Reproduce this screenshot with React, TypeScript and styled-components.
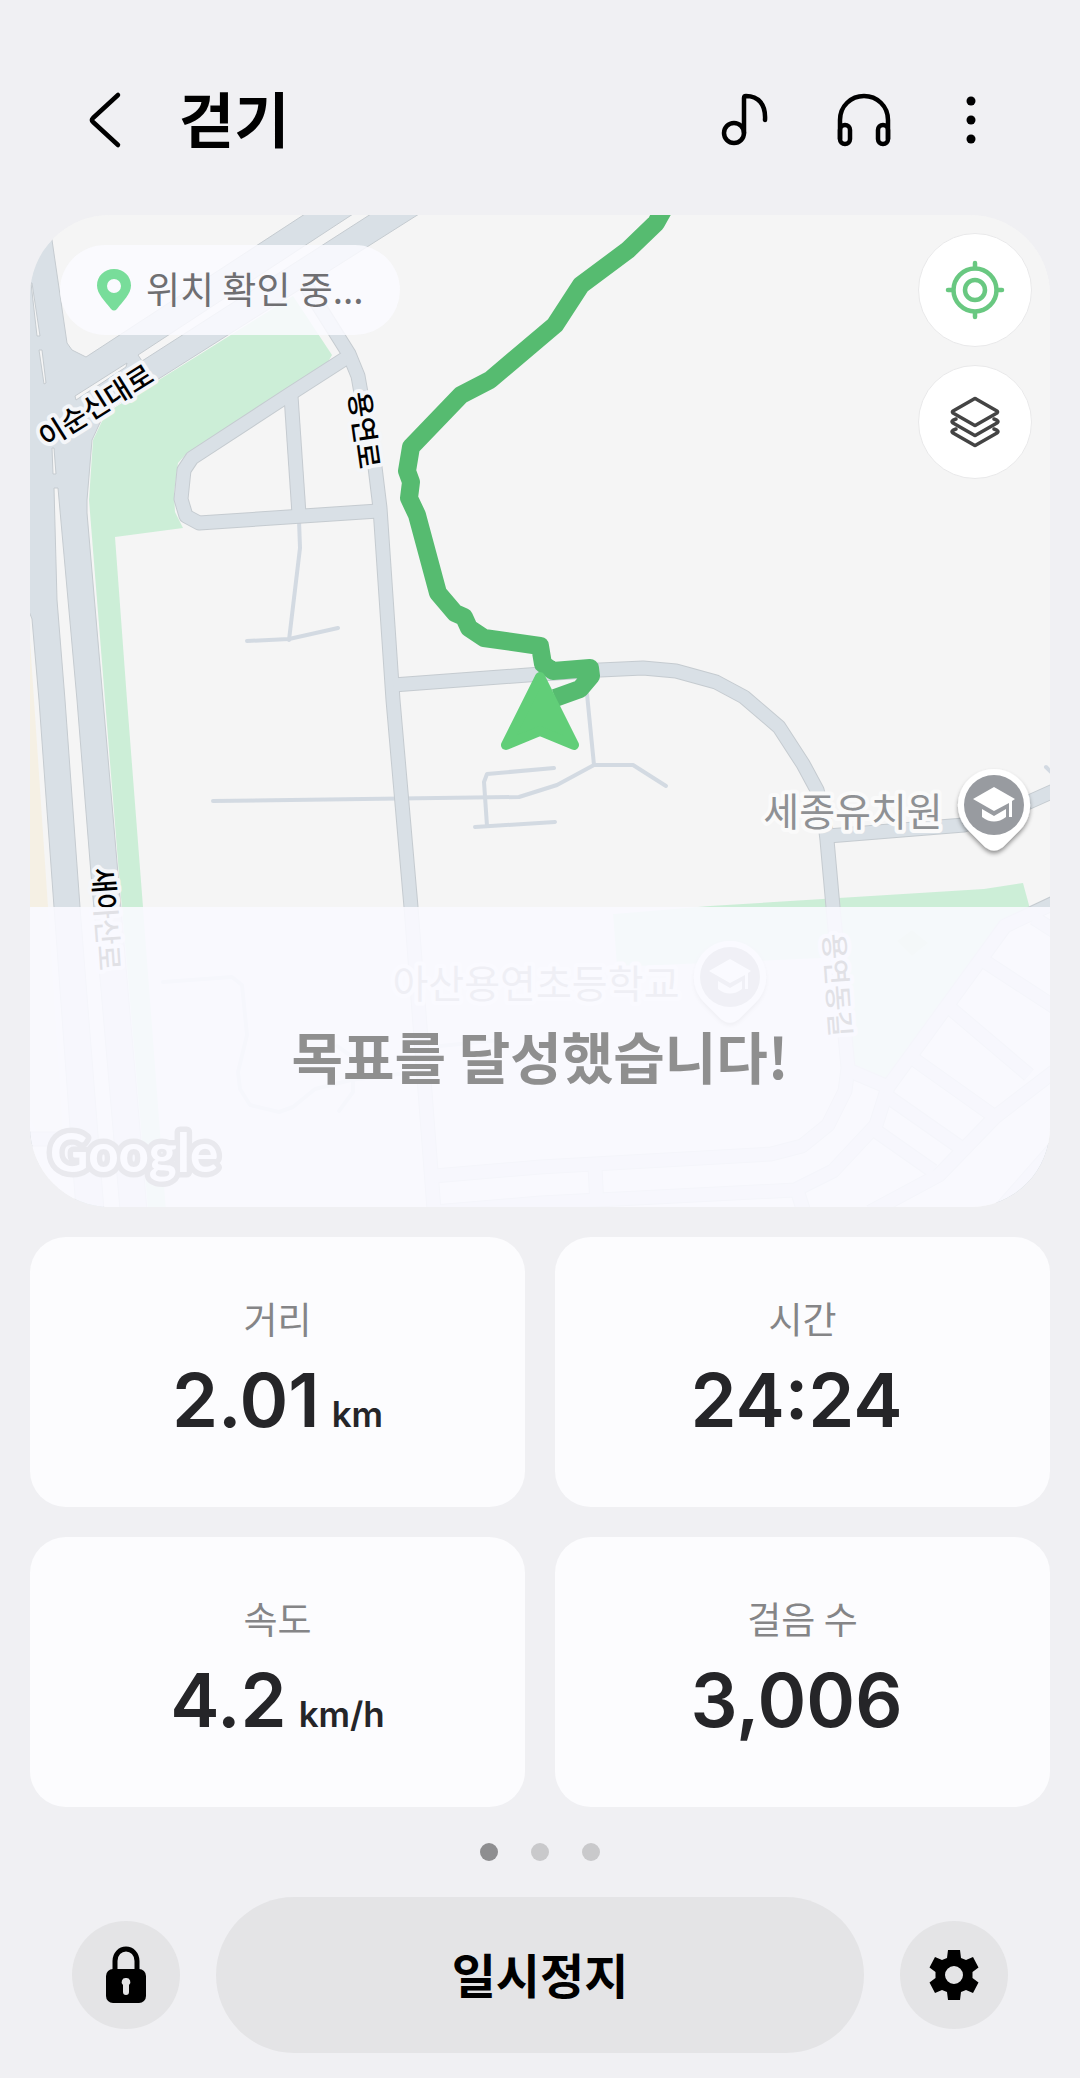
import React from "react";
import styled, { createGlobalStyle } from "styled-components";

const GlobalStyle = createGlobalStyle`
  *, *::before, *::after { box-sizing: border-box; }
  body {
    margin: 0;
    background: #f0f0f3;
    font-family: "Noto Sans CJK KR", "Noto Sans", sans-serif;
  }
  button {
    font: inherit;
    color: inherit;
    border: 0;
    padding: 0;
    background: none;
    cursor: pointer;
  }
  svg { display: block; }
`;

const Page = styled.main`
  display: flex;
  flex-direction: column;
  color: #000;
`;

const Header = styled.header`
  display: flex;
  align-items: center;
  padding: 72px 86px 47px 80px;
`;

const Title = styled.h1`
  flex: 1;
  margin: 0 0 0 49px;
  padding-bottom: 6px;
  font-size: 60px;
  line-height: 90px;
  font-weight: 700;
`;

const Actions = styled.div`
  display: flex;
  gap: 48px;
`;

const IconButton = styled.button<{ $width: number }>`
  display: grid;
  place-items: center;
  width: ${(p) => p.$width}px;
  height: 72px;
`;

const Content = styled.div`
  display: flex;
  flex-direction: column;
  gap: 30px;
  padding: 0 30px;
`;

const MapCard = styled.section`
  position: relative;
  aspect-ratio: 1020 / 992;
  overflow: hidden;
  border-radius: 80px;
  background: #f5f5f5;
`;

const MapArt = styled.svg`
  width: 100%;
  height: 100%;
`;

const LocationPill = styled.div`
  position: absolute;
  top: 30px;
  left: 30px;
  display: flex;
  align-items: center;
  gap: 14px;
  height: 90px;
  padding: 0 36px;
  border-radius: 45px;
  background: rgba(250, 250, 255, 0.85);
  color: #6f6f72;
  font-size: 37px;
  line-height: 48px;
`;

const PillText = styled.span`
  padding-bottom: 4px;
`;

const MapControls = styled.div`
  position: absolute;
  top: 18px;
  right: 18px;
  display: flex;
  flex-direction: column;
  gap: 18px;
`;

const MapButton = styled.button`
  display: grid;
  place-items: center;
  width: 114px;
  height: 114px;
  border: 1px solid #e9e9ea;
  border-radius: 50%;
  background: #fff;
`;

const GoalBanner = styled.div`
  position: absolute;
  right: 0;
  bottom: 0;
  left: 0;
  display: flex;
  align-items: center;
  justify-content: center;
  height: 300px;
  padding-bottom: 4px;
  background: rgba(250, 250, 255, 0.9);
  color: #8f8f8f;
  font-size: 56px;
  line-height: 60px;
  font-weight: 700;
`;

const Stats = styled.dl`
  display: grid;
  grid-template-columns: 1fr 1fr;
  gap: 30px;
  margin: 0;
`;

const StatCard = styled.div`
  display: flex;
  flex-direction: column;
  align-items: center;
  gap: 10px;
  padding: 57px 24px 59px;
  border-radius: 36px;
  background: #fcfcfe;
`;

const StatLabel = styled.dt`
  color: #858587;
  font-size: 37px;
  line-height: 48px;
`;

const StatValue = styled.dd`
  display: flex;
  align-items: baseline;
  margin: 0;
  color: #252528;
  font-family: Inter, sans-serif;
  font-size: 74px;
  line-height: 96px;
  font-weight: 600;
`;

const Amount = styled.span`
  margin-right: 12px;
`;

const Unit = styled.span`
  font-size: 35px;
  line-height: 48px;
`;

const Pager = styled.nav`
  display: flex;
  justify-content: center;
  gap: 33px;
  padding: 36px 0;
`;

const PagerDot = styled.button<{ $active: boolean }>`
  width: 18px;
  height: 18px;
  border-radius: 50%;
  background: ${(p) => (p.$active ? "#8e8e90" : "#c9c9cb")};
`;

const Controls = styled.footer`
  display: flex;
  align-items: center;
  gap: 36px;
  padding: 0 72px 25px;
`;

const RoundButton = styled.button`
  display: grid;
  place-items: center;
  flex: none;
  width: 108px;
  height: 108px;
  border-radius: 50%;
  background: #e4e4e6;
`;

const PauseButton = styled.button`
  flex: 1;
  height: 156px;
  padding-bottom: 4px;
  border-radius: 78px;
  background: #e4e4e6;
  font-size: 48px;
  line-height: 72px;
  font-weight: 700;
`;

const STREETS = [
  "M300 276 L349 354 L358 376 L361 393 L366 420 L375 467 L380 508 L393 700 L411 907 L434 1210",
  "M346 358 L290 394 L192 458 L184 470 L181 499 L186 516 L199 523 L378 511",
  "M291 396 L299 514",
  "M393 685 L541 674 L600 670 L643 668 L676 671 L716 682 L744 697 L779 727 L803 764 L817 790 L824 815 L827 840 L833 907 L840 983 L848 1068 L845 1091 L828 1125 L802 1146 L771 1154 L540 1167 L434 1176",
  "M828 836 L964 825 L1029 802 L1056 790",
  "M1056 902 L1005 926 L888 1087 L876 1125 L833 1171 L795 1190 L540 1203 L434 1212",
  "M1056 1070 L995 1117 L939 1175 L870 1212",
  "M1034 918 L1056 932",
  "M984 961 L1056 1008",
  "M950 1008 L1029 1075",
  "M915 1060 L991 1114",
  "M884 1094 L964 1150",
  "M876 1131 L933 1171",
  "M848 1070 L888 1087",
  "M595 1167 L597 1206",
  "M797 1190 L804 1212",
  "M1056 1146 L998 1212",
  "M24 1139 L70 1139",
];

const LANES = [
  "M299 520 L300 548 L289 640",
  "M247 641 L289 639 L338 628",
  "M587 694 L594 765 L557 785 L519 797 L213 801",
  "M594 765 L633 765 L666 786",
  "M554 768 L487 774 L484 782 L487 826",
  "M475 827 L555 822",
  "M163 982 L232 977 L242 985 L247 1035 L238 1072 L240 1089 L250 1105 L279 1112 L293 1107 L315 1089 L351 1080 L399 1074",
  "M353 1080 L353 1092 L339 1111",
  "M337 1046 L351 1056",
  "M440 1046 L500 1040",
  "M1046 767 L1054 775",
];

const AVENUE =
  "M20 215 L48 215 L52 240 L67 343 L72 350 L86 357 L305 214 L419 214 L160 378 L105 412 L92 440 L87 500 L87 513 L103 700 L118 874 L147 1210 L120 1210 L91 874 L77 700 L58 488 L54 488 L57 600 L65 700 L80 907 L104 1210 L76 1210 L54 907 L39 700 L32 619 L20 588 Z";

const MEDIANS = [
  "M353 214 L371 214 L142 361 L138 355 Z",
  "M127 363 L75 396 L76 400 L126 367 Z",
  "M52 448 L54 448 L56 474 L53 474 Z",
  "M39 350 L42 350 L46 383 L44 384 Z",
  "M31 283 L32 283 L40 336 L37 336 Z",
];

type StreetLabelProps = { x: number; y: number; angle: number; children: string };

const StreetLabel = ({ x, y, angle, children }: StreetLabelProps) => (
  <text
    transform={`translate(${x} ${y}) rotate(${angle})`}
    textAnchor="middle"
    dy="10"
    fontSize="28"
    fontWeight="500"
    fill="#000"
    stroke="#f4f6f9"
    strokeWidth="8"
    strokeLinejoin="round"
    paintOrder="stroke"
  >
    {children}
  </text>
);

type PlaceProps = { x: number; y: number; labelX: number; children: string };

const Place = ({ x, y, labelX, children }: PlaceProps) => (
  <g>
    <text
      x={labelX}
      y={y + 21}
      textAnchor="middle"
      fontSize="39"
      fill="#8f9194"
      stroke="#fafafa"
      strokeWidth="8"
      strokeLinejoin="round"
      paintOrder="stroke"
    >
      {children}
    </text>
    <g transform={`translate(${x} ${y})`}>
      <path
        d="M0 -36 A36 36 0 0 1 26 25 L9 42 Q0 49 -9 42 L-26 25 A36 36 0 0 1 0 -36 Z"
        fill="#fff"
        filter="url(#pinShadow)"
      />
      <circle r="30" fill="#989ba0" />
      <path d="M0 -18 L21 -6 L18 -4 V12 H15 V-2 L0 6 L-21 -6 Z" fill="#fff" />
      <path d="M-12 4 L0 11 L12 4 V12 Q0 21 -12 12 Z" fill="#fff" />
    </g>
  </g>
);

const WalkMap = () => (
  <MapArt viewBox="30 215 1020 992" preserveAspectRatio="xMidYMid slice" role="img" aria-label="지도">
    <defs>
      <filter id="pinShadow" x="-30%" y="-30%" width="160%" height="160%">
        <feDropShadow dx="0" dy="3" stdDeviation="2" floodColor="#000" floodOpacity="0.4" />
      </filter>
    </defs>
    <rect x="30" y="215" width="1020" height="992" fill="#f5f5f5" />
    <path d="M30 640 L34 700 L48 907 L66 1180 L30 1120 Z" fill="#f5f0e4" />
    <g fill="#cceed7">
      <path d="M293 296 L332 355 L328 362 L187 453 L178 463 L174 493 L175 512 L183 528 L115 537 L127 700 L143 907 L166 1210 L148 1210 L119 874 L105 700 L89 500 L93 440 L106 413 Z" />
      <path d="M613 914 L710 906 L984 889 L1023 883 L1030 909 L1003 922 L884 1081 L852 1064 L846 957 L617 967 Z" />
    </g>
    <path d="M897 941 L912 930 L928 943 L912 956 Z" fill="#c3ecc0" />
    <g fill="none" stroke="#d3dae2" strokeWidth="4" strokeLinecap="round" strokeLinejoin="round">
      {LANES.map((d) => (
        <path key={d} d={d} />
      ))}
    </g>
    <g fill="none" stroke="#c5cbd0" strokeWidth="15" strokeLinejoin="round">
      {STREETS.map((d) => (
        <path key={d} d={d} />
      ))}
    </g>
    <path d={AVENUE} fill="#d9e0e6" stroke="#c5cbd0" />
    <g fill="none" stroke="#d9e0e6" strokeWidth="13" strokeLinejoin="round">
      {STREETS.map((d) => (
        <path key={d} d={d} />
      ))}
    </g>
    <g fill="#f5f5f5" stroke="#c5cbd0" strokeWidth="1">
      {MEDIANS.map((d) => (
        <path key={d} d={d} />
      ))}
    </g>
    <StreetLabel x={96} y={406} angle={-32}>이순신대로</StreetLabel>
    <StreetLabel x={364} y={430} angle={82}>용연로</StreetLabel>
    <StreetLabel x={106} y={919} angle={86}>새아산로</StreetLabel>
    <StreetLabel x={837} y={985} angle={86}>용연동길</StreetLabel>
    <Place x={994} y={805} labelX={853}>세종유치원</Place>
    <Place x={730} y={977} labelX={536}>아산용연초등학교</Place>
    <text
      x="50"
      y="1172"
      fontFamily="Lato, sans-serif"
      fontSize="53"
      fontWeight="700"
      fill="#fff"
      stroke="#555"
      strokeWidth="11"
      strokeLinejoin="round"
      paintOrder="stroke"
    >
      Google
    </text>
    <path
      d="M666 205 L656 223 L628 250 L581 285 L555 325 L490 380 L461 395 L411 447 L407 471 L411 482 L409 498 L417 515 L438 593 L455 613 L464 617 L469 628 L484 638 L540 646 L543 664 L553 671 L590 668 L591 676 L580 689 L555 698"
      fill="none"
      stroke="#56bb70"
      strokeWidth="18"
      strokeLinejoin="round"
    />
    <path
      d="M540 677 L574 745 L540 731 L506 745 Z"
      fill="#61ce78"
      stroke="#61ce78"
      strokeWidth="10"
      strokeLinejoin="round"
    />
  </MapArt>
);

const BackIcon = () => (
  <svg width="48" height="60" viewBox="-24 -30 48 60" fill="none" stroke="#000" strokeWidth="4.500" strokeLinecap="round" strokeLinejoin="round" aria-hidden="true">
    <path d="M13 -25 L-12 -2 Q-14 0 -12 2 L13 25" />
  </svg>
);

const MusicIcon = () => (
  <svg width="60" height="60" viewBox="-30 -30 60 60" fill="none" stroke="#000" strokeWidth="4.500" strokeLinecap="round" strokeLinejoin="round" aria-hidden="true">
    <circle cx="-10" cy="13" r="10" />
    <path d="M0 13 V-22 Q0 -24 2 -24 C14 -24 22 -16 21 0" />
  </svg>
);

const HeadphonesIcon = () => (
  <svg width="60" height="60" viewBox="-30 -30 60 60" fill="none" stroke="#000" strokeWidth="4.500" strokeLinecap="round" aria-hidden="true">
    <path d="M-24 19 V0 C-24 -14 -13 -24 0 -24 S24 -14 24 0 V19" />
    <rect x="-24" y="5" width="10" height="19" rx="5" />
    <rect x="14" y="5" width="10" height="19" rx="5" />
  </svg>
);

const MoreIcon = () => (
  <svg width="46" height="60" viewBox="-23 -30 46 60" aria-hidden="true">
    <circle cy="-19" r="4.500" />
    <circle r="4.500" />
    <circle cy="19" r="4.500" />
  </svg>
);

const PinIcon = () => (
  <svg width="36" height="44" viewBox="0 0 36 44" fill="#78dd9a" aria-hidden="true">
    <path fillRule="evenodd" d="M18 1 C27.500 1 35 8 35 17.500 C35 26 27 33 21 41 Q18 44 15 41 C9 33 1 26 1 17.500 C1 8 8.500 1 18 1 Z M18 11 a7 7 0 1 0 0 14 a7 7 0 1 0 0 -14 Z" />
  </svg>
);

const LocateIcon = () => (
  <svg width="60" height="60" viewBox="-30 -30 60 60" fill="none" stroke="#69c881" strokeWidth="4.500" strokeLinecap="round" aria-hidden="true">
    <circle r="21.500" />
    <circle r="10" />
    <path d="M0 -27 V-22 M0 27 V22 M-27 0 H-22 M27 0 H22" />
  </svg>
);

const LayersIcon = () => (
  <svg width="60" height="60" viewBox="-30 -30 60 60" fill="none" stroke="#444" strokeWidth="3.500" strokeLinecap="round" strokeLinejoin="round" aria-hidden="true">
    <path d="M-1 -23 Q0 -24 1 -23 L22 -11 Q23 -10 22 -9 L1 3 Q0 4 -1 3 L-22 -9 Q-23 -10 -22 -11 Z" />
    <path d="M-19 -3 Q-25 -1 -22 1 L-1 13 Q0 14 1 13 L22 1 Q25 -1 19 -3" />
    <path d="M-19 7 Q-25 9 -22 11 L-1 23 Q0 24 1 23 L22 11 Q25 9 19 7" />
  </svg>
);

const LockIcon = () => (
  <svg width="60" height="60" viewBox="-30 -30 60 60" aria-hidden="true">
    <path d="M-11 -5 V-14 C-11 -21 -6 -26 0 -26 S11 -21 11 -14 V-5" fill="none" stroke="#000" strokeWidth="5" />
    <rect x="-20" y="-6" width="40" height="34" rx="7" />
    <path d="M0 3 a4 4 0 0 1 3 7 V17 a3 3 0 0 1 -6 0 V10 a4 4 0 0 1 3 -7 Z" fill="#e4e4e6" />
  </svg>
);

const GearIcon = () => (
  <svg width="60" height="60" viewBox="-30 -30 60 60" aria-hidden="true">
    <path
      fillRule="evenodd"
      d="M-6 -25 H6 L7 -17 L12 -15 L19 -18 L24.500 -7.500 L18.500 -3 V3 L24.500 7.500 L19 18 L12 15 L7 17 L6 25 H-6 L-7 17 L-12 15 L-19 18 L-24.500 7.500 L-18.500 3 V-3 L-24.500 -7.500 L-19 -18 L-12 -15 L-7 -17 Z M0 -9 a9 9 0 1 0 0 18 a9 9 0 1 0 0 -18 Z"
    />
  </svg>
);

const STATS = [
  { label: "거리", value: "2.01", unit: "km" },
  { label: "시간", value: "24:24" },
  { label: "속도", value: "4.2", unit: "km/h" },
  { label: "걸음 수", value: "3,006" },
];

const PAGES = [1, 2, 3];

export default function App() {
  return (
    <Page>
      <GlobalStyle />
      <Header>
        <IconButton $width={50} aria-label="뒤로"><BackIcon /></IconButton>
        <Title>걷기</Title>
        <Actions>
          <IconButton $width={72} aria-label="음악"><MusicIcon /></IconButton>
          <IconButton $width={72} aria-label="오디오 가이드"><HeadphonesIcon /></IconButton>
          <IconButton $width={46} aria-label="더보기"><MoreIcon /></IconButton>
        </Actions>
      </Header>
      <Content>
        <MapCard>
          <WalkMap />
          <GoalBanner>목표를 달성했습니다!</GoalBanner>
          <LocationPill>
            <PinIcon />
            <PillText>위치 확인 중...</PillText>
          </LocationPill>
          <MapControls>
            <MapButton aria-label="현재 위치"><LocateIcon /></MapButton>
            <MapButton aria-label="지도 유형"><LayersIcon /></MapButton>
          </MapControls>
        </MapCard>
        <Stats>
          {STATS.map((s) => (
            <StatCard key={s.label}>
              <StatLabel>{s.label}</StatLabel>
              <StatValue>
                <Amount>{s.value}</Amount>
                {s.unit && <Unit>{s.unit}</Unit>}
              </StatValue>
            </StatCard>
          ))}
        </Stats>
      </Content>
      <Pager aria-label="페이지">
        {PAGES.map((n) => (
          <PagerDot key={n} $active={n === 1} aria-label={`${n} 페이지`} />
        ))}
      </Pager>
      <Controls>
        <RoundButton aria-label="잠금"><LockIcon /></RoundButton>
        <PauseButton>일시정지</PauseButton>
        <RoundButton aria-label="설정"><GearIcon /></RoundButton>
      </Controls>
    </Page>
  );
}
